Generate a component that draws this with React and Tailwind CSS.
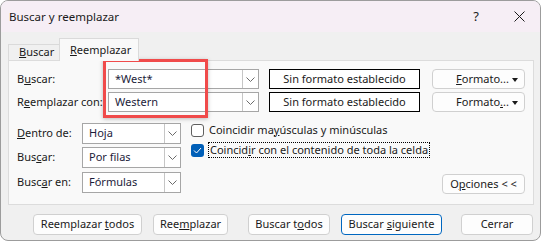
const font = { fontFamily: '"Noto Sans", "Open Sans", sans-serif' }

function Chevron() {
  return (
    <svg width="9" height="5" viewBox="0 0 9 5" className="block">
      <path d="M0.5 0.5 L4.5 4.5 L8.5 0.5" fill="none" stroke="#6b6b6b" strokeWidth="1" />
    </svg>
  )
}

function Combo({ value, width, height = 20 }) {
  return (
    <div
      className="flex shrink-0 items-stretch border border-[#a6a6a6] bg-white"
      style={{ width, height }}
    >
      <div className="flex flex-1 items-center pl-[6px] text-[#1c1c3a]">{value}</div>
      <div className="flex w-[16px] items-center justify-center border-l border-[#c6c6c6] bg-white">
        <Chevron />
      </div>
    </div>
  )
}

function Btn({ children, className = '', primary = false }) {
  return (
    <div
      className={`flex shrink-0 items-center justify-center rounded-[4px] border bg-[#fdfdfd] text-[#1a1a1a] ${
        primary ? 'border-[#0067c0]' : 'border-[#d0d0d0]'
      } ${className}`}
    >
      <span>{children}</span>
    </div>
  )
}

function FormatBtn({ children }) {
  return (
    <Btn className="relative ml-[12px] h-[20px] w-[93px]">
      <span className="ml-[8px]">{children}</span>
      <span className="absolute right-[6px] top-[8px] h-0 w-0 border-x-[3px] border-t-[4px] border-x-transparent border-t-[#1a1a1a]" />
    </Btn>
  )
}

export default function App() {
  return (
    <div className="relative h-[243px] w-[542px] bg-white text-[11px]" style={font}>
      <div className="flex h-[241px] w-[541px] flex-col overflow-hidden rounded-[8px] border border-[#9c9c9c] bg-[#f0f0f0]">
        <div className="flex h-[31px] shrink-0 items-center bg-[#f6eef5] text-[11.5px] text-[#1a1a1a]">
          <span className="pl-[8px]">Buscar y reemplazar</span>
          <span className="ml-auto mr-[35px] text-[13px]">?</span>
          <svg width="11" height="11" viewBox="0 0 11 11" className="mr-[15px]">
            <path d="M0.5 0.5 L10.5 10.5 M10.5 0.5 L0.5 10.5" stroke="#1a1a1a" strokeWidth="1" />
          </svg>
        </div>

        <div className="ml-[7px] mt-[6px] flex h-[22px] items-end text-[#1a1a1a]">
          <div className="flex h-[16px] w-[51px] items-center border-l border-t border-[#dadada] pl-[10px]">
            <span><u>B</u>uscar</span>
          </div>
          <div className="relative z-10 -mb-px flex h-[23px] w-[80px] items-center border-x border-t border-[#dadada] bg-[#f9f9f9] pl-[10px]">
            <span><u>R</u>eemplazar</span>
          </div>
        </div>

        <div className="ml-[7px] flex h-[145px] w-[526px] flex-col border border-[#dcdcdc] bg-[#f9f9f9] pl-[8px] text-[#1a1a1a]">
          <div className="mt-[8px] flex h-[20px] items-center">
            <div className="w-[91px]">B<u>u</u>scar:</div>
            <Combo value="*West*" width={151} />
            <div className="ml-[10px] flex h-[20px] w-[151px] items-center justify-center border border-black bg-white">
              Sin formato establecido
            </div>
            <FormatBtn><u>F</u>ormato...</FormatBtn>
          </div>
          <div className="mt-[3px] flex h-[20px] items-center">
            <div className="w-[91px] whitespace-nowrap">R<u>e</u>emplazar con:</div>
            <Combo value="Western" width={151} />
            <div className="ml-[10px] flex h-[20px] w-[151px] items-center justify-center border border-black bg-white">
              Sin formato establecido
            </div>
            <FormatBtn>Formato<u>.</u>..</FormatBtn>
          </div>

          <div className="mt-[11px] flex flex-1 pb-[10px] pr-[8px]">
            <div className="flex flex-col">
              <div className="flex h-[21px] items-center">
                <div className="w-[65px]"><u>D</u>entro de:</div>
                <Combo value="Hoja" width={99} height={21} />
              </div>
              <div className="mt-[3px] flex h-[21px] items-center">
                <div className="w-[65px]">Bus<u>c</u>ar:</div>
                <Combo value="Por filas" width={99} height={21} />
              </div>
              <div className="mt-[4px] flex h-[21px] items-center">
                <div className="w-[65px]">Busc<u>a</u>r en:</div>
                <Combo value="Fórmulas" width={99} height={21} />
              </div>
            </div>
            <div className="ml-[10px] flex flex-1 flex-col">
              <div className="flex h-[14px] items-center">
                <div className="h-[13px] w-[13px] rounded-[3px] border border-[#5f5f5f] bg-white" />
                <span className="ml-[5px]">Coincidir ma<u>y</u>úsculas y minúsculas</span>
              </div>
              <div className="mt-[5px] flex h-[16px] items-center">
                <div className="flex h-[13px] w-[13px] items-center justify-center rounded-[3px] bg-[#005fb8]">
                  <svg width="9" height="7" viewBox="0 0 9 7">
                    <path d="M1 3.5 L3.5 6 L8 1" fill="none" stroke="white" strokeWidth="1" />
                  </svg>
                </div>
                <span className="ml-[4px] border border-dotted border-black px-px leading-[14px]">
                  Coincid<u>i</u>r con el contenido de toda la celda
                </span>
              </div>
              <div className="mt-auto flex justify-end">
                <Btn className="h-[20px] w-[83px]">O<u>p</u>ciones &lt; &lt;</Btn>
              </div>
            </div>
          </div>
        </div>

        <div className="mt-[9px] flex">
          <Btn className="ml-[32px] h-[21px] w-[109px]">Reemplazar <u>t</u>odos</Btn>
          <Btn className="ml-[11px] h-[21px] w-[75px]">Ree<u>m</u>plazar</Btn>
          <Btn className="ml-[20px] h-[21px] w-[82px]">Buscar t<u>o</u>dos</Btn>
          <Btn primary className="ml-[11px] h-[21px] w-[101px]">Buscar <u>s</u>iguiente</Btn>
          <Btn className="ml-[19px] h-[21px] w-[72px]">Cerrar</Btn>
        </div>
      </div>

      <div className="absolute left-[103px] top-[59px] h-[59px] w-[105px] border-[3px] border-[#f04b4b] shadow-[0_1px_4px_rgba(0,0,0,0.25)]" />
    </div>
  )
}
